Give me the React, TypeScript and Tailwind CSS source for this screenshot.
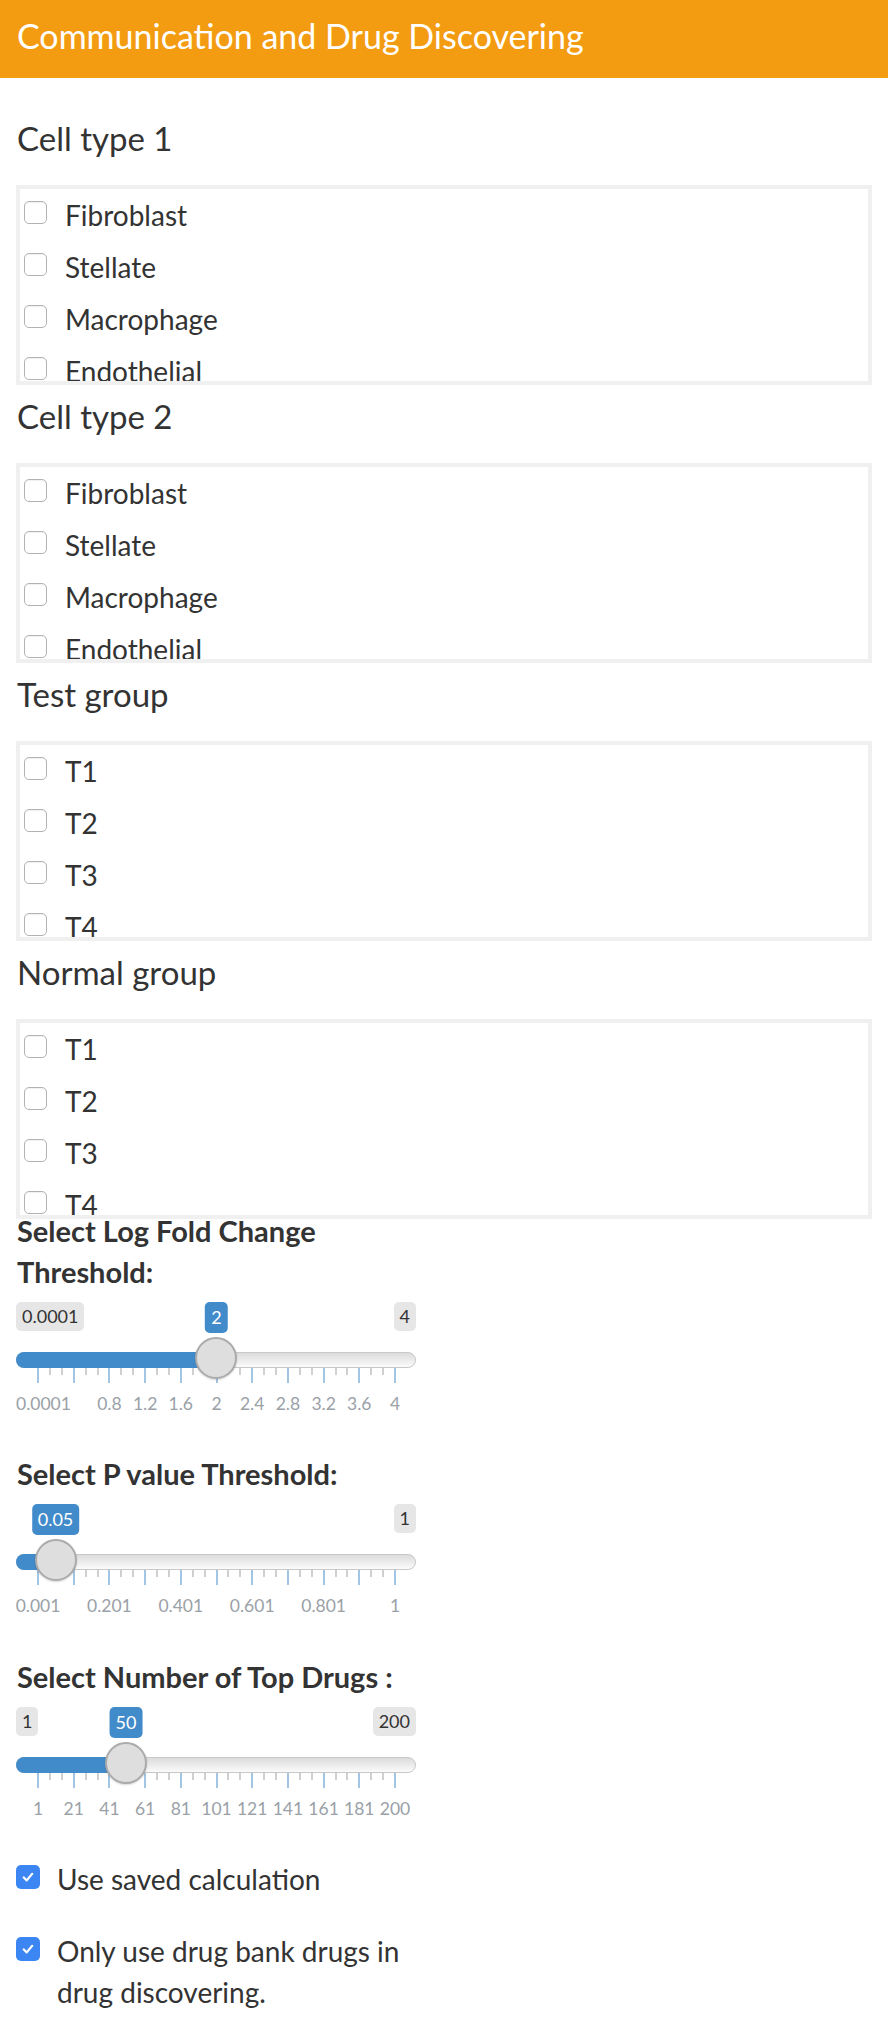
import { ReactNode } from "react";

const groups = [
  {
    title: "Cell type 1",
    items: ["Fibroblast", "Stellate", "Macrophage", "Endothelial", "Epithelial"],
  },
  {
    title: "Cell type 2",
    items: ["Fibroblast", "Stellate", "Macrophage", "Endothelial", "Epithelial"],
  },
  { title: "Test group", items: ["T1", "T2", "T3", "T4", "T5"] },
  { title: "Normal group", items: ["T1", "T2", "T3", "T4", "T5"] },
];

const Check = ({ checked }: { checked?: boolean }) =>
  checked ? (
    <span className="flex h-[24px] w-[24px] shrink-0 items-center justify-center rounded-[5px] bg-[#3b86f2]">
      <svg viewBox="0 0 16 16" className="h-[16px] w-[16px]">
        <path
          d="M3.8 8.4l2.9 3 5.5-6.6"
          fill="none"
          stroke="#fff"
          strokeWidth="2.2"
          strokeLinecap="round"
          strokeLinejoin="round"
        />
      </svg>
    </span>
  ) : (
    <span className="block h-[23px] w-[23px] shrink-0 rounded-[5px] border border-[#b3b3b3] bg-white shadow-[inset_0_1px_1px_rgba(0,0,0,0.06)]" />
  );

const CheckGroup = ({
  title,
  items,
  first,
}: {
  title: string;
  items: string[];
  first?: boolean;
}) => (
  <div className={first ? "mt-[40px]" : "mt-[11px]"}>
    <div className="pl-[1px] text-[33px] leading-[40px]">{title}</div>
    <div className="mt-[27px] h-[200px] overflow-hidden border-4 border-[#f0f0f0]">
      {items.map((it) => (
        <div key={it} className="flex h-[52px] items-center pl-[4px]">
          <span className="mb-[5px] block">
            <Check />
          </span>
          <span className="ml-[18px] text-[28px] leading-[52px]">{it}</span>
        </div>
      ))}
    </div>
  </div>
);

interface SliderProps {
  min: number;
  max: number;
  value: number;
  fmt: (v: number) => string;
  grid: { i: number; text: string; start?: boolean }[];
  showMin?: boolean;
}

const PAD = 22;
const SPAN = 357;

const Slider = ({ min, max, value, fmt, grid, showMin = true }: SliderProps) => {
  const x = PAD + ((value - min) / (max - min)) * SPAN;
  const majors = Array.from({ length: 11 }, (_, i) => PAD + (i * SPAN) / 10);
  const minors: number[] = [];
  for (let i = 1; i <= 10; i++) {
    minors.push(PAD + ((i - 1 + 1 / 3) * SPAN) / 10);
    minors.push(PAD + ((i - 1 + 2 / 3) * SPAN) / 10);
  }
  return (
    <div className="relative mt-[10px] h-[116px] w-[400px]">
      {showMin && (
        <span className="absolute left-0 top-0 h-[29px] rounded-[5px] bg-[#e6e6e6] px-[6px] text-[18px] leading-[29px]">
          {fmt(min)}
        </span>
      )}
      <span className="absolute right-0 top-0 h-[29px] rounded-[5px] bg-[#e6e6e6] px-[6px] text-[18px] leading-[29px]">
        {fmt(max)}
      </span>
      <span
        className="absolute top-0 h-[31px] -translate-x-1/2 rounded-[5px] bg-[#428bca] px-[6px] text-[18px] leading-[31px] text-white"
        style={{ left: x }}
      >
        {fmt(value)}
      </span>
      <div className="absolute left-0 top-[50px] h-[16px] w-full rounded-full border border-[#c8c8c8] bg-linear-to-b from-[#dcdcdc] to-[#fbfbfb]" />
      <div
        className="absolute left-0 top-[50px] h-[16px] rounded-l-full bg-[#428bca]"
        style={{ width: x }}
      />
      {minors.map((m, k) => (
        <span
          key={"s" + k}
          className="absolute top-[66px] h-[7px] w-[2px] bg-[#d0d0d0]"
          style={{ left: m - 1 }}
        />
      ))}
      {majors.map((m, k) => (
        <span
          key={"b" + k}
          className="absolute top-[66px] h-[15px] w-[2px] bg-[#a3c5e4]"
          style={{ left: m - 1 }}
        />
      ))}
      {grid.map((g) => (
        <span
          key={g.text}
          className={
            g.start
              ? "absolute left-0 top-[92px] text-[17.5px] leading-[20px] text-[#9aa1a7]"
              : "absolute top-[92px] -translate-x-1/2 text-[17.5px] leading-[20px] text-[#9aa1a7]"
          }
          style={g.start ? undefined : { left: majors[g.i] }}
        >
          {g.text}
        </span>
      ))}
      <div
        className="absolute top-[35px] h-[42px] w-[42px] -translate-x-1/2 rounded-full border-2 border-[#ababab] bg-[#dedede] shadow-[0_1px_2px_rgba(0,0,0,0.15)]"
        style={{ left: x }}
      />
    </div>
  );
};

const SliderLabel = ({ children, className }: { children: ReactNode; className: string }) => (
  <div className={"text-[29px] font-bold leading-[41px] " + className}>{children}</div>
);

export default function App() {
  return (
    <div className="min-h-[2042px] bg-white font-['Lato','Noto_Sans',sans-serif] text-[#333333]">
      <header className="flex h-[78px] items-center bg-[#f39c12] px-[17px] pb-[7px] text-[34px] text-white">
        Communication and Drug Discovering
      </header>
      <div className="px-[16px]">
        {groups.map((g, i) => (
          <CheckGroup key={g.title} title={g.title} items={g.items} first={i === 0} />
        ))}

        <div className="w-[400px]">
          <SliderLabel className="-mt-[9px] pl-[1px]">
            Select Log Fold Change
            <br />
            Threshold:
          </SliderLabel>
          <Slider
            min={0.0001}
            max={4}
            value={2}
            fmt={(v) => String(v)}
            grid={[
              { i: 0, text: "0.0001", start: true },
              { i: 2, text: "0.8" },
              { i: 3, text: "1.2" },
              { i: 4, text: "1.6" },
              { i: 5, text: "2" },
              { i: 6, text: "2.4" },
              { i: 7, text: "2.8" },
              { i: 8, text: "3.2" },
              { i: 9, text: "3.6" },
              { i: 10, text: "4" },
            ]}
          />

          <SliderLabel className="mt-[35px] pl-[1px]">Select P value Threshold:</SliderLabel>
          <Slider
            min={0.001}
            max={1}
            value={0.05}
            showMin={false}
            fmt={(v) => String(v)}
            grid={[
              { i: 0, text: "0.001" },
              { i: 2, text: "0.201" },
              { i: 4, text: "0.401" },
              { i: 6, text: "0.601" },
              { i: 8, text: "0.801" },
              { i: 10, text: "1" },
            ]}
          />

          <SliderLabel className="mt-[36px] pl-[1px]">Select Number of Top Drugs :</SliderLabel>
          <Slider
            min={1}
            max={200}
            value={50}
            fmt={(v) => String(v)}
            grid={["1", "21", "41", "61", "81", "101", "121", "141", "161", "181", "200"].map(
              (t, i) => ({ i, text: t })
            )}
          />

          <label className="mt-[36px] flex items-start">
            <span className="mt-[6px] block">
              <Check checked />
            </span>
            <span className="ml-[17px] text-[28px] leading-[41px]">Use saved calculation</span>
          </label>
          <label className="mt-[31px] flex items-start">
            <span className="mt-[6px] block">
              <Check checked />
            </span>
            <span className="ml-[17px] text-[28px] leading-[41px]">
              Only use drug bank drugs in drug discovering.
            </span>
          </label>
        </div>
      </div>
    </div>
  );
}
